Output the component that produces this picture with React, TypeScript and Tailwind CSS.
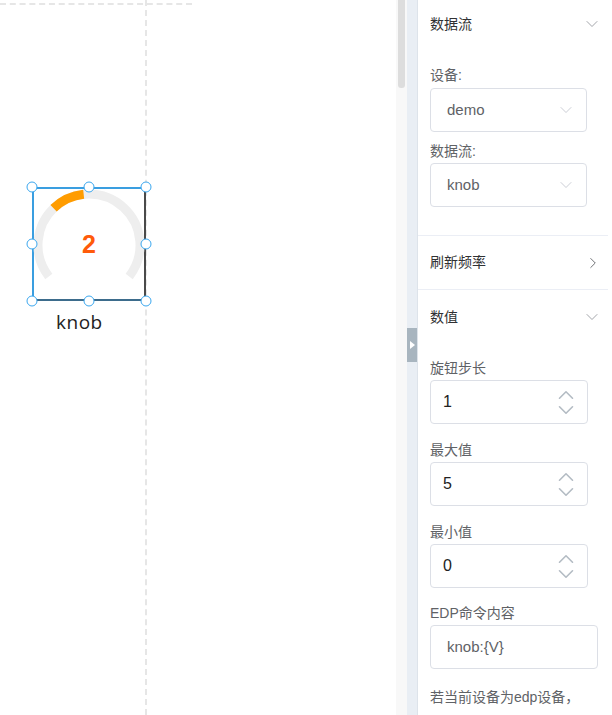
import { ChevronDown, ChevronRight, ChevronUp } from 'lucide-react'

const font = { fontFamily: '"Liberation Sans", "Noto Sans CJK SC", sans-serif' }

function polar(cx: number, cy: number, r: number, deg: number) {
  const a = ((deg - 90) * Math.PI) / 180
  return [cx + r * Math.cos(a), cy + r * Math.sin(a)]
}

function arc(cx: number, cy: number, r: number, from: number, to: number) {
  const [x1, y1] = polar(cx, cy, r, from)
  const [x2, y2] = polar(cx, cy, r, to)
  const large = to - from > 180 ? 1 : 0
  return `M ${x1} ${y1} A ${r} ${r} 0 ${large} 1 ${x2} ${y2}`
}

function Handle({ className }: { className: string }) {
  return (
    <div
      className={`absolute h-[11px] w-[11px] -translate-x-1/2 -translate-y-1/2 rounded-full border border-[#3aa7ef] bg-white ${className}`}
    />
  )
}

function Knob() {
  return (
    <div className="absolute left-[32px] top-[187px] h-[114px] w-[114px]">
      <div className="absolute inset-0 border-2 border-t-[#3a9ee0] border-l-[#3a9ee0] border-r-[#4a4a4a] border-b-[#3d6c8c]" />
      <svg className="absolute inset-0" width="114" height="114" viewBox="0 0 114 114">
        <path d={arc(57, 58, 51, -128, 128)} fill="none" stroke="#eeeeee" strokeWidth="9" />
        <path d={arc(57, 58, 51, -44, -6)} fill="none" stroke="#ff9c00" strokeWidth="9" />
      </svg>
      <div className="absolute inset-0 flex items-center justify-center pt-[1px] text-[25px] font-bold text-[#ff5b0a]">
        2
      </div>
      <Handle className="left-0 top-0" />
      <Handle className="left-1/2 top-0" />
      <Handle className="left-full top-0" />
      <Handle className="left-0 top-1/2" />
      <Handle className="left-full top-1/2" />
      <Handle className="left-0 top-full" />
      <Handle className="left-1/2 top-full" />
      <Handle className="left-full top-full" />
      <div
        className="absolute left-[24px] top-[123px] text-[19px] leading-[24px] tracking-[0.5px] text-[#222]"
        style={{ fontFamily: '"Open Sans", sans-serif' }}
      >
        knob
      </div>
    </div>
  )
}

function Select({ value }: { value: string }) {
  return (
    <div className="flex h-[44px] w-[157px] items-center justify-between rounded-[4px] border border-[#dcdfe6] pl-[16px] pr-[10px] text-[15px] text-[#606266]">
      <span>{value}</span>
      <ChevronDown size={20} strokeWidth={1} className="text-[#c0c4cc]" />
    </div>
  )
}

function NumberInput({ value }: { value: string }) {
  return (
    <div className="flex h-[44px] w-[158px] items-center justify-between rounded-[4px] border border-[#dcdfe6] pl-[12px] pr-[8px] text-[16px] text-[#222]">
      <span>{value}</span>
      <div className="flex flex-col items-center text-[#b4bcc4]">
        <ChevronUp size={26} strokeWidth={1.5} className="-mb-[11px] -mt-[4px]" />
        <ChevronDown size={26} strokeWidth={1.5} className="-mb-[4px]" />
      </div>
    </div>
  )
}

function Label({ children, className = '' }: { children: React.ReactNode; className?: string }) {
  return <div className={`text-[14px] leading-[20px] text-[#606266] ${className}`}>{children}</div>
}

export default function App() {
  return (
    <div className="flex h-[715px] w-[612px] overflow-hidden bg-white" style={font}>
      {/* canvas */}
      <div className="relative h-full w-[396px] bg-white">
        <div className="absolute left-0 top-[3px] h-0 w-[192px] border-t-2 border-dashed border-[#e6e6e6]" />
        <div className="absolute left-[145px] top-0 h-full w-0 border-l-2 border-dashed border-[#e6e6e6]" />
        <Knob />
      </div>

      {/* scrollbar */}
      <div className="h-full w-[11px] bg-[#f8f8f8] px-[2px]">
        <div className="h-[88px] rounded-b-[3px] bg-[#dddddd]" />
      </div>

      {/* collapse strip */}
      <div className="flex h-full w-[11px] flex-col border-r border-[#dde3ea] bg-[#e9eef4]">
        <div className="mt-[328px] flex h-[34px] items-center justify-center bg-[#a8b5bf]">
          <div className="h-0 w-0 border-y-[4px] border-l-[5px] border-y-transparent border-l-white" />
        </div>
      </div>

      {/* panel */}
      <div className="flex h-full flex-1 flex-col bg-white pr-[4px]">
        <div className="flex h-[48px] items-center justify-between pl-[12px] pr-[6px] text-[14px] text-[#303133]">
          <span>数据流</span>
          <ChevronDown size={20} strokeWidth={1} className="text-[#909399]" />
        </div>
        <div className="flex flex-col pl-[12px] pt-[17px]">
          <Label className="mb-[3px]">设备:</Label>
          <Select value="demo" />
          <Label className="mb-[2px] mt-[9px]">数据流:</Label>
          <Select value="knob" />
        </div>
        <div className="mt-[28px] border-t border-[#ebeef5]" />
        <div className="flex h-[53px] items-center justify-between pl-[12px] pr-[6px] text-[14px] text-[#303133]">
          <span>刷新频率</span>
          <ChevronRight size={18} strokeWidth={1.2} className="text-[#606266]" />
        </div>
        <div className="border-t border-[#ebeef5]" />
        <div className="flex h-[54px] items-center justify-between pl-[12px] pr-[6px] text-[14px] text-[#303133]">
          <span>数值</span>
          <ChevronDown size={20} strokeWidth={1} className="text-[#909399]" />
        </div>
        <div className="flex flex-col pl-[12px] pt-[14px]">
          <Label className="mb-[2px]">旋钮步长</Label>
          <NumberInput value="1" />
          <Label className="mb-[2px] mt-[16px]">最大值</Label>
          <NumberInput value="5" />
          <Label className="mb-[2px] mt-[16px]">最小值</Label>
          <NumberInput value="0" />
          <Label className="mb-[2px] mt-[15px]">EDP命令内容</Label>
          <div className="flex h-[44px] w-[168px] items-center rounded-[4px] border border-[#dcdfe6] pl-[16px] text-[15px] text-[#606266]">
            knob:{'{V}'}
          </div>
          <Label className="mt-[18px] text-[#555]">若当前设备为edp设备，</Label>
        </div>
      </div>
    </div>
  )
}
